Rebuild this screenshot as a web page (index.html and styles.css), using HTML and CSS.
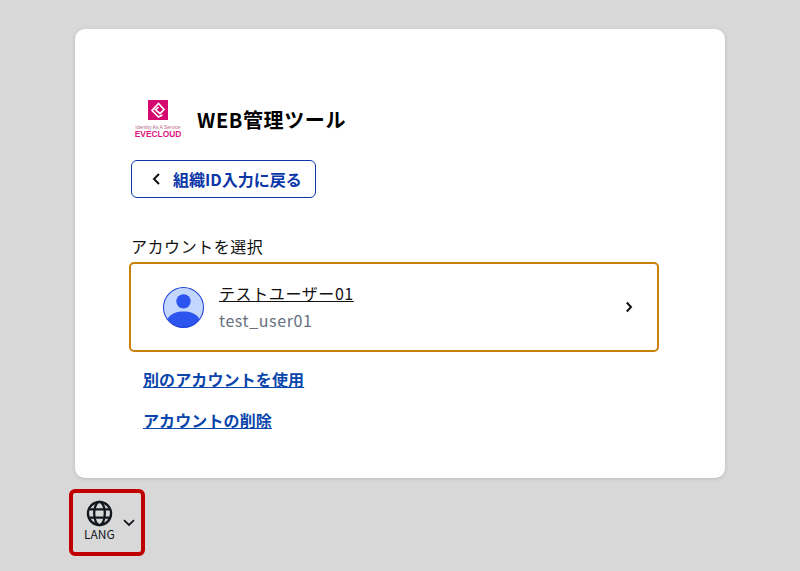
FILE: index.html
```html
<!DOCTYPE html>
<html lang="ja">
<head>
  <meta charset="UTF-8" />
  <title>WEB管理ツール</title>
  <link rel="stylesheet" href="styles.css">
</head>
<body>
  <main class="card">
    <header class="brand">
      <div class="logo">
        <svg class="logo-mark" viewBox="0 0 20 20" width="20" height="20">
          <rect width="20" height="20" fill="#d5086f"/>
          <path d="M14.5 15 L10.5 17 L4 10.5 L10.5 3.5 L16 9.5 L12 13.5 L7.5 9.8 L10.5 7" fill="none" stroke="#fff" stroke-width="1.7"/>
        </svg>
        <span class="logo-small">Identity As A Service</span>
        <span class="logo-name">EVECLOUD</span>
      </div>
      <h1>WEB管理ツール</h1>
    </header>

    <a class="back-btn" href="#">
      <svg viewBox="0 0 12 12" width="12" height="12"><path d="M9 1 L4 6 L9 11" fill="none" stroke="#111" stroke-width="2"/></svg>
      <span>組織ID入力に戻る</span>
    </a>

    <p class="section-label">アカウントを選択</p>

    <a class="account" href="#">
      <svg class="avatar" viewBox="0 0 40 40" width="41" height="41">
        <circle cx="20" cy="20" r="19.5" fill="#c3d6fb"/>
        <circle cx="20" cy="14" r="7" fill="#2b55ee"/>
        <path d="M4.5 31 C8 25.5 14 24 20 24 C26 24 32 25.5 35.5 31 C32 36.5 26 39.5 20 39.5 C14 39.5 8 36.5 4.5 31 Z" fill="#2b55ee"/>
        <circle cx="20" cy="20" r="19.5" fill="none" stroke="#1c3fd8" stroke-width="1"/>
      </svg>
      <div class="account-text">
        <span class="account-name">テストユーザー01</span>
        <span class="account-id">test_user01</span>
      </div>
      <svg class="chevron" viewBox="0 0 12 12" width="12" height="12"><path d="M3.8 1.5 L8 6 L3.8 10.5" fill="none" stroke="#111" stroke-width="2"/></svg>
    </a>

    <div class="links">
      <a href="#">別のアカウントを使用</a>
      <a href="#">アカウントの削除</a>
    </div>
  </main>

  <button class="lang" type="button">
    <span class="lang-main">
      <svg viewBox="0 0 28 28" width="27" height="27" fill="none" stroke="#14181f" stroke-width="2.4">
        <circle cx="14" cy="14" r="12"/>
        <ellipse cx="14" cy="14" rx="5.5" ry="12"/>
        <path d="M3.5 9.8 H24.5 M3.5 18.2 H24.5"/>
      </svg>
      <span class="lang-text">LANG</span>
    </span>
    <svg class="lang-caret" viewBox="0 0 12 8" width="12" height="8"><path d="M1 1.2 L6 6 L11 1.2" fill="none" stroke="#14181f" stroke-width="1.8"/></svg>
  </button>
</body>
</html>
```

FILE: styles.css
```css
* { box-sizing: border-box; margin: 0; padding: 0; }
html, body { height: 100%; }
body {
  font-family: "Noto Sans CJK JP", "Noto Sans", sans-serif;
  background: #d8d8d8;
  padding: 29px 75px 0;
  overflow: hidden;
  color: #111;
}
.card {
  width: 650px;
  height: 449px;
  background: #fff;
  border-radius: 10px;
  box-shadow: 0 1px 4px rgba(0,0,0,0.12);
  padding: 71px 66px 0 56px;
}
.brand {
  display: flex;
  align-items: center;
  gap: 15px;
  margin-left: 3px;
  height: 38px;
}
.logo {
  width: 48px;
  display: flex;
  flex-direction: column;
  align-items: center;
}
.logo-small {
  font-family: "Liberation Sans", sans-serif;
  font-size: 5px;
  line-height: 6px;
  margin-top: 4px;
  color: #b9668e;
  white-space: nowrap;
}
.logo-name {
  font-family: "Liberation Sans", sans-serif;
  font-size: 8.4px;
  line-height: 9px;
  font-weight: 700;
  color: #e0147f;
}
.brand h1 {
  font-size: 20px;
  font-weight: 700;
  color: #000;
  line-height: 40px;
  letter-spacing: 0.6px;
  margin-top: 2px;
}
.back-btn {
  display: inline-flex;
  align-items: center;
  gap: 11px;
  height: 38px;
  margin-top: 22px;
  padding: 0 13px 0 18px;
  border: 1px solid #0b36a8;
  border-radius: 6px;
  color: #0b36a8;
  font-size: 16px;
  font-weight: 700;
  text-decoration: none;
}
.section-label {
  margin-top: 37px;
  font-size: 16px;
  line-height: 22px;
  letter-spacing: 0.55px;
}
.account {
  display: flex;
  align-items: center;
  width: 530px;
  height: 90px;
  margin: 5px 0 0 -2px;
  padding: 0 22px 0 32px;
  border: 2px solid #ca810c;
  border-radius: 5px;
  text-decoration: none;
  color: #111;
}
.account-text {
  display: flex;
  flex-direction: column;
  flex: 1;
  margin: -2px 0 0 15px;
  gap: 5px;
}
.account-name {
  align-self: flex-start;
  font-size: 16px;
  line-height: 22px;
  letter-spacing: 0.6px;
  text-decoration: underline;
}
.account-id {
  font-size: 16px;
  line-height: 22px;
  letter-spacing: 0.6px;
  color: #66707e;
}
.links {
  display: flex;
  flex-direction: column;
  align-items: flex-start;
  gap: 19px;
  margin: 16px 0 0 12px;
}
.links a {
  font-size: 16px;
  line-height: 22px;
  font-weight: 700;
  letter-spacing: 0.12px;
  color: #0b46ac;
}
.lang {
  display: flex;
  align-items: center;
  gap: 8px;
  width: 76px;
  height: 67px;
  margin: 11px 0 0 -6px;
  padding: 0 0 0 11px;
  background: none;
  border: 4px solid #c00000;
  border-radius: 6px;
  font-family: inherit;
  color: #14181f;
}
.lang-main {
  display: flex;
  flex-direction: column;
  align-items: center;
  padding-bottom: 3px;
}
.lang-text {
  font-size: 12px;
  line-height: 16px;
  margin-top: -1px;
}
```
